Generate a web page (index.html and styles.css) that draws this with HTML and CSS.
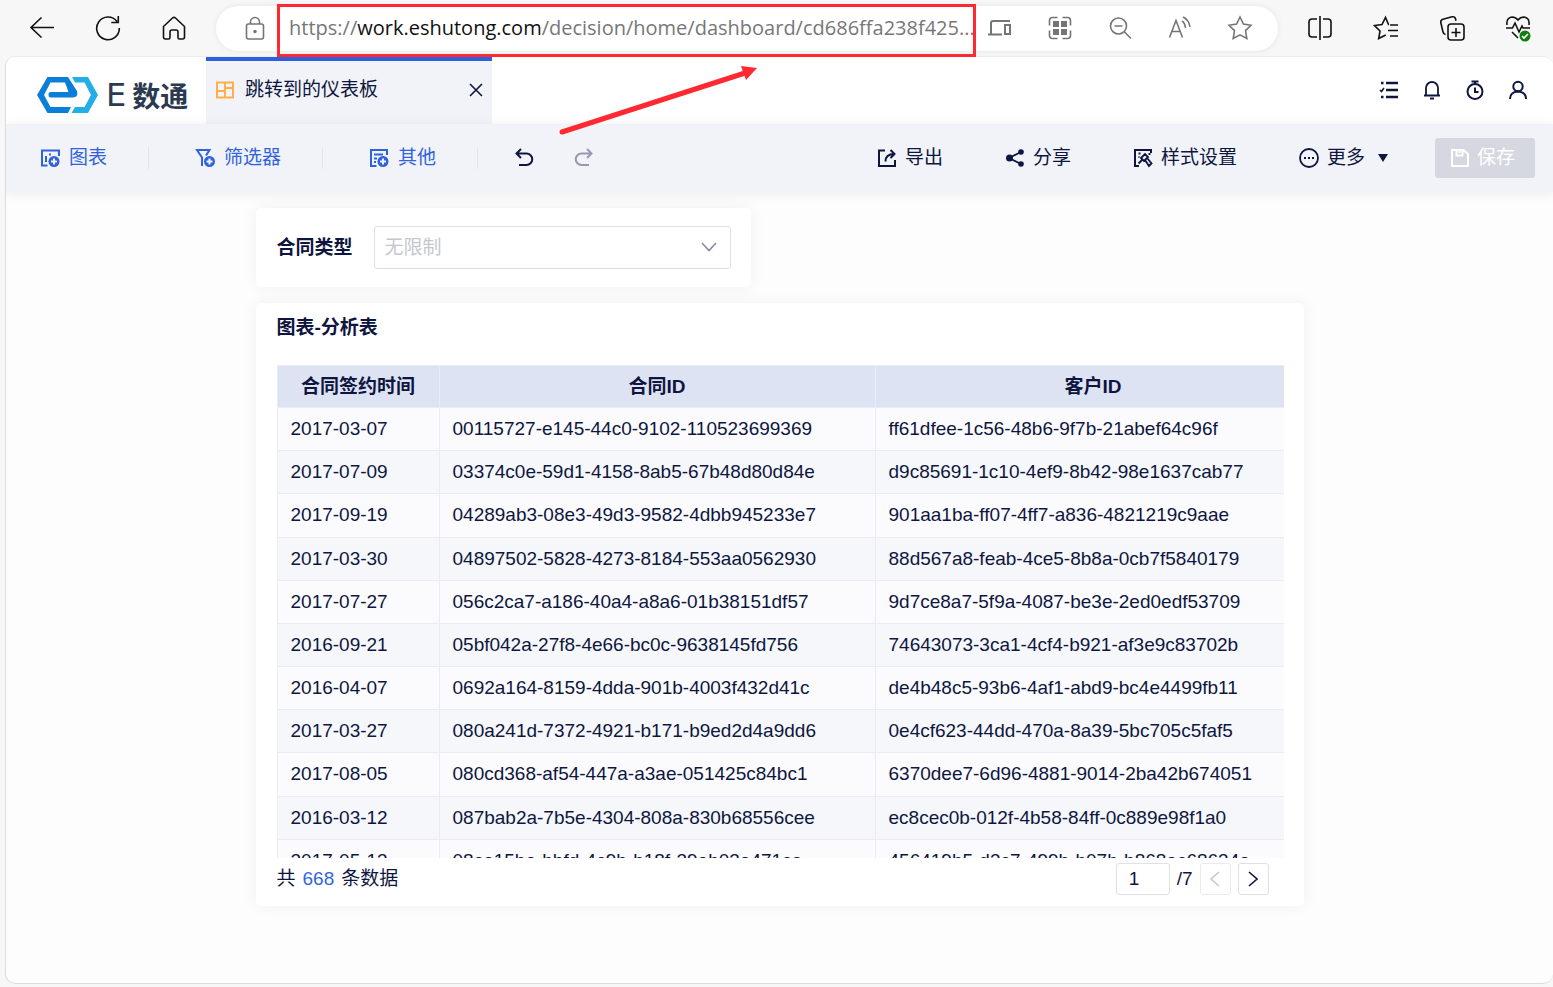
FILE: index.html
```html
<!DOCTYPE html>
<html lang="zh-CN">

<head>
    <meta charset="UTF-8">
    <title>跳转到的仪表板</title>
    <link rel="stylesheet" href="styles.css">
</head>

<body>
    <div class="browserBar">
        <div class="navBtns">
            <button class="iconBtn" aria-label="后退"><svg width="26" height="24" viewBox="0 0 26 24"><path d="M25 11.500H2M12.500 1.500L2 11.500l10.500 10"/></svg></button>
            <button class="iconBtn" aria-label="刷新"><svg width="26" height="26" viewBox="0 0 26 26"><path d="M22 6.500A11.300 11.300 0 1 0 24.300 13M23.300 1v6.500h-7"/></svg></button>
            <button class="iconBtn" aria-label="主页"><svg width="24" height="26" viewBox="0 0 24 26"><path d="M1.500 11.500L10.500 3q1.500-1.300 3 0l9 8.500V22q0 2-2 2h-3q-1.500 0-1.500-1.500V17q0-2-2-2h-4q-2 0-2 2v5.500Q8 24 6.500 24h-3q-2 0-2-2z"/></svg></button>
        </div>
        <div class="addressBar">
            <svg width="24" height="26" viewBox="0 0 24 26"><rect x="3.500" y="9" width="17" height="15" rx="2"/><path d="M7.500 9V7a4.500 4.500 0 0 1 9 0v2"/><circle cx="12" cy="16.500" r="1" class="fill"/></svg>
            <div class="url" role="textbox" aria-label="地址"><span>https://</span>work.eshutong.com<span>/decision/home/dashboard/cd686ffa238f425...</span></div>
            <div class="addressBtns">
                <button class="iconBtn" aria-label="设备"><svg width="24" height="24" viewBox="0 0 24 24"><path stroke-width="2" d="M22 5H5q-2 0-2 2v11M0 18.500h14M17 9h5v9h-5z"/></svg></button>
                <button class="iconBtn" aria-label="二维码"><svg width="24" height="24" viewBox="0 0 24 24"><path d="M1.500 9.500V4.500q0-3 3-3h5M14.500 1.500h5q3 0 3 3v5M22.500 14.500v5q0 3-3 3h-5M9.500 22.500h-5q-3 0-3-3v-5"/><path class="fill" stroke="none" d="M5 5h6v6H5zM13 5h6v6h-6zM5 13h6v6H5zM13 13h6v6h-6z"/></svg></button>
                <button class="iconBtn" aria-label="缩小"><svg width="24" height="24" viewBox="0 0 24 24"><circle cx="10.500" cy="10" r="8"/><path d="M6.500 10h8M16.500 16l6.500 6.500"/></svg></button>
                <button class="iconBtn" aria-label="朗读"><svg width="24" height="24" viewBox="0 0 24 24"><path d="M1.500 21.500L8 4.500l6.500 17M4 15.500h8M14 5q3 2 3.500 7M15 1q6 3 7 10"/></svg></button>
                <button class="iconBtn" aria-label="收藏"><svg width="26" height="26" viewBox="0 0 26 26"><path d="M13 2l3.400 7 7.600 1.200-5.500 5.400 1.300 7.900L13 19.800l-6.800 3.700 1.300-7.900L2 10.200 9.600 9z"/></svg></button>
            </div>
            <div class="redBox"></div>
        </div>
        <div class="extBtns">
            <button class="iconBtn" aria-label="分屏"><svg width="26" height="26" viewBox="0 0 26 26"><path d="M10 4H5Q2 4 2 7v12q0 3 3 3h5M16 4h5q3 0 3 3v12q0 3-3 3h-5M13 1v24"/></svg></button>
            <button class="iconBtn" aria-label="收藏夹"><svg width="26" height="26" viewBox="0 0 26 26"><path d="M16 9.500h-.500L12.500 2.500 9 9.500l-7.500 1 5.500 5.500-1.300 7.500 7-3.500M17 10h8M15 15.500h10M17 21h8"/></svg></button>
            <button class="iconBtn" aria-label="集锦"><svg width="26" height="26" viewBox="0 0 26 26"><rect x="9" y="9" width="16" height="16" rx="3"/><path d="M17 13v9M12.500 17.500h9M6.500 19.500Q4.500 19 4 17L1.800 7.500Q1.500 5 4 4.300l9-2.500q3-.500 3.500 2l.5 2"/></svg></button>
            <button class="iconBtn" aria-label="浏览器概要"><svg width="26" height="28" viewBox="0 0 26 28"><path d="M2 11Q1 4 7 3q3.500 0 6 3 2.500-3 6-3 6 1 5 8M1 14h6.500l2.500-5 4 9 3-6 1 2h7M7 18l6 6"/><circle cx="20" cy="22" r="5.500" class="ok"/><path class="tick" d="M17 22l2 2 4-4"/></svg></button>
        </div>
    </div>

    <div class="page">
        <header class="topBar">
            <div class="logo">
                <svg width="61" height="36" viewBox="0 0 61 36"><path fill="#0a7fd9" d="M10.500 0H31l9 14q1.500 6-4 6.500H14q-2.500 0-2.500-2.800T14 15h17.500L28 5.500H13.500L7 18l6.500 12H34l-3 6H10.500L0 18z"/><path fill="#24aee6" d="M35 0h16l10 18-10 18H34.500l3.500-6h9.500L54 18 47.500 5.500H38z"/></svg>
                <span class="latin">E</span><span>数通</span>
            </div>
            <div class="tab">
                <svg width="18" height="18" viewBox="0 0 18 18"><path fill="none" stroke="#fbb04c" stroke-width="2" d="M1 1.500h16v15H1zM9 1v16M1 10h8M9 7h8"/></svg>
                <span>跳转到的仪表板</span>
                <button class="iconBtn" aria-label="关闭"><svg width="14" height="14" viewBox="0 0 14 14"><path d="M1 1l12 12M13 1L1 13"/></svg></button>
            </div>
            <div class="userBtns">
                <button class="iconBtn" aria-label="任务"><svg width="20" height="20" viewBox="0 0 20 20"><path stroke-width="2.500" d="M7 3h12M7 10h12M7 17h12M2 3h2.500M2 17h2.500"/><path d="M1 10l1.500 1.500L5 8"/></svg></button>
                <button class="iconBtn" aria-label="通知"><svg width="20" height="20" viewBox="0 0 20 20"><path stroke-width="1.800" d="M2 15.500h16M4 15V8a6 6 0 0 1 12 0v7M8 18.500h4"/></svg></button>
                <button class="iconBtn" aria-label="定时"><svg width="20" height="20" viewBox="0 0 20 20"><circle cx="10" cy="11.500" r="7.500" stroke-width="2"/><path stroke-width="2" d="M6.500 1.500h7M10 2v2M10 7.500V12h3.500"/></svg></button>
                <button class="iconBtn" aria-label="用户"><svg width="20" height="20" viewBox="0 0 20 20"><circle cx="10" cy="6.500" r="4.700" stroke-width="2"/><path stroke-width="2" d="M2 19q0-7 8-7.500 8 .5 8 7.500"/></svg></button>
            </div>
        </header>

        <div class="toolBar">
            <button class="toolBtn add"><svg width="20" height="20" viewBox="0 0 20 20"><path stroke-width="2" d="M7.500 17.500H2v-15h17V8M6 14V8M10 5.500v2"/><circle cx="14" cy="13.500" r="5.500" class="fill" stroke="none"/><path class="plus" d="M14 10.500v6M11 13.500h6"/></svg>图表</button>
            <button class="toolBtn add"><svg width="20" height="20" viewBox="0 0 20 20"><path stroke-width="2" d="M7 18V9.500L2 2h12.500L11 7.500"/><circle cx="14.500" cy="13.500" r="5.500" class="fill" stroke="none"/><path class="plus" d="M14.500 10.500v6M11.500 13.500h6"/></svg>筛选器</button>
            <button class="toolBtn add"><svg width="20" height="20" viewBox="0 0 20 20"><path stroke-width="2" d="M7.500 18H2V2h16v5M5 6.500h9M5 10.500h3M5 14h2"/><circle cx="14" cy="13.500" r="5.500" class="fill" stroke="none"/><path class="plus" d="M14 10.500v6M11 13.500h6"/></svg>其他</button>
            <div class="history">
                <button class="iconBtn" aria-label="撤销"><svg width="20" height="20" viewBox="0 0 20 20"><path stroke-width="2" d="M7 1L2.500 5.500 7 10M3 5.500h9.500a5.700 5.700 0 0 1 0 11.500H5"/></svg></button>
                <button class="iconBtn" aria-label="重做" disabled><svg width="20" height="20" viewBox="0 0 20 20"><path stroke-width="2" d="M13 1l4.500 4.500L13 10M17 5.500H7.500a5.700 5.700 0 0 0 0 11.500H15"/></svg></button>
            </div>
            <div class="actions">
                <button class="toolBtn"><svg width="20" height="20" viewBox="0 0 20 20"><path stroke-width="2" d="M8 2.500H2v15.500h16v-6M8.500 13.500Q8.500 6 17 6M13.500 2l4 4-4 4"/></svg>导出</button>
                <button class="toolBtn"><svg width="20" height="20" viewBox="0 0 20 20"><path stroke-width="1.800" d="M16 4L4 10l12 6"/><circle cx="4.500" cy="10" r="3.500" class="fill" stroke="none"/><circle cx="16" cy="4" r="2.800" class="fill" stroke="none"/><circle cx="16" cy="16" r="2.800" class="fill" stroke="none"/></svg>分享</button>
                <button class="toolBtn"><svg width="20" height="20" viewBox="0 0 20 20"><path stroke-width="2" d="M2 19V2h17M2 18h4M18 2v3"/><path stroke-width="1.800" d="M8 10l4-4 3 3-4 4zM9 12l-3.500 3.500M12 12l4 6 2.500-2.500-4-5M5.500 5.500h2M15.500 6h2M5.500 9h1"/></svg>样式设置</button>
                <button class="toolBtn"><svg width="20" height="20" viewBox="0 0 20 20"><circle cx="10" cy="10" r="9" stroke-width="1.800"/><path stroke-width="2" d="M5 10h2M9 10h2M13 10h2"/></svg>更多<i class="caret"></i></button>
            </div>
            <button class="saveBtn" disabled><svg width="20" height="20" viewBox="0 0 20 20"><path stroke-width="2" d="M2 2h11.500L18 6v12H2zM6.500 2v5.500h6V2M9.500 3v2"/></svg>保存</button>
        </div>

        <main class="canvas">
            <div class="dashboard">
                <div class="card filter">
                    <label for="contractType">合同类型</label>
                    <div class="selectBox">
                        <select id="contractType">
                            <option>无限制</option>
                        </select>
                        <svg width="16" height="10" viewBox="0 0 16 10"><path d="M1 1l7 7.500L15 1"/></svg>
                    </div>
                </div>

                <div class="card chart">
                    <h2>图表-分析表</h2>
                    <div class="tableBox">
                        <table>
                            <colgroup>
                                <col class="colDate">
                                <col class="colContract">
                                <col>
                            </colgroup>
                            <thead>
                                <tr><th>合同签约时间</th><th>合同ID</th><th>客户ID</th></tr>
                            </thead>
                            <tbody>
                                <tr><td>2017-03-07</td><td>00115727-e145-44c0-9102-110523699369</td><td>ff61dfee-1c56-48b6-9f7b-21abef64c96f</td></tr>
                                <tr><td>2017-07-09</td><td>03374c0e-59d1-4158-8ab5-67b48d80d84e</td><td>d9c85691-1c10-4ef9-8b42-98e1637cab77</td></tr>
                                <tr><td>2017-09-19</td><td>04289ab3-08e3-49d3-9582-4dbb945233e7</td><td>901aa1ba-ff07-4ff7-a836-4821219c9aae</td></tr>
                                <tr><td>2017-03-30</td><td>04897502-5828-4273-8184-553aa0562930</td><td>88d567a8-feab-4ce5-8b8a-0cb7f5840179</td></tr>
                                <tr><td>2017-07-27</td><td>056c2ca7-a186-40a4-a8a6-01b38151df57</td><td>9d7ce8a7-5f9a-4087-be3e-2ed0edf53709</td></tr>
                                <tr><td>2016-09-21</td><td>05bf042a-27f8-4e66-bc0c-9638145fd756</td><td>74643073-3ca1-4cf4-b921-af3e9c83702b</td></tr>
                                <tr><td>2016-04-07</td><td>0692a164-8159-4dda-901b-4003f432d41c</td><td>de4b48c5-93b6-4af1-abd9-bc4e4499fb11</td></tr>
                                <tr><td>2017-03-27</td><td>080a241d-7372-4921-b171-b9ed2d4a9dd6</td><td>0e4cf623-44dd-470a-8a39-5bc705c5faf5</td></tr>
                                <tr><td>2017-08-05</td><td>080cd368-af54-447a-a3ae-051425c84bc1</td><td>6370dee7-6d96-4881-9014-2ba42b674051</td></tr>
                                <tr><td>2016-03-12</td><td>087bab2a-7b5e-4304-808a-830b68556cee</td><td>ec8cec0b-012f-4b58-84ff-0c889e98f1a0</td></tr>
                                <tr><td>2017-05-13</td><td>08ca15be-bbfd-4c9b-b18f-39eb03e471ca</td><td>456419b5-d3c7-499b-b07b-b868ec68634e</td></tr>
                            </tbody>
                        </table>
                    </div>
                    <div class="pager">
                        <div class="total">共<span>668</span>条数据</div>
                        <input type="text" value="1" aria-label="页码">
                        <span>/7</span>
                        <button class="pageBtn" aria-label="上一页" disabled><svg width="10" height="16" viewBox="0 0 10 16"><path d="M9 1L1 8l8 7"/></svg></button>
                        <button class="pageBtn" aria-label="下一页"><svg width="10" height="16" viewBox="0 0 10 16"><path d="M1 1l8 7-8 7"/></svg></button>
                    </div>
                </div>
            </div>
        </main>
    </div>

    <svg class="arrow" width="200" height="72" viewBox="0 0 200 72"><path d="M4 67L187 8" stroke="#ff2a31" stroke-width="5"/><circle cx="4" cy="67" r="2.500" fill="#ff2a31"/><path d="M199 3l-16-2 5 14z" fill="#ff2a31"/></svg>
</body>

</html>
```
FILE: styles.css
```css
* {
    box-sizing: border-box;
}

body {
    margin: 0;
    min-height: 100vh;
    display: flex;
    flex-direction: column;
    position: relative;
    background: #f7f7f7;
    color: #0e1640;
    font-family: "Liberation Sans", "Noto Sans CJK SC", sans-serif;
    font-size: 19px;
    line-height: 28px;
}

button {
    padding: 0;
    border: none;
    background: none;
    color: inherit;
    font: inherit;
}

svg {
    flex: none;
    fill: none;
    stroke: currentColor;
    stroke-width: 1.6;
}

svg .fill {
    fill: currentColor;
}

.logo svg {
    stroke: none;
}

.iconBtn {
    display: flex;
    flex: none;
    width: 24px;
    justify-content: center;
    align-items: center;
}

/* browser bar */
.browserBar {
    display: flex;
    align-items: center;
    height: 56px;
    padding: 0 23px 0 30px;
    color: #111;
}

.navBtns,
.extBtns {
    display: flex;
    align-items: center;
    gap: 42px;
}

.addressBar {
    position: relative;
    display: flex;
    flex: 1;
    align-items: center;
    min-width: 0;
    height: 45px;
    margin: 0 30px;
    padding: 0 26px 0 27px;
    border-radius: 23px;
    background: #fff;
    box-shadow: 0 0 6px rgba(0, 0, 0, 0.08);
    color: #757575;
}

.url {
    flex: 1;
    min-width: 0;
    margin-left: 22px;
    overflow: hidden;
    white-space: nowrap;
    color: #111;
    font-family: "Open Sans", sans-serif;
    font-size: 20px;
}

.url span {
    color: #777;
}

.addressBtns {
    display: flex;
    align-items: center;
    gap: 36px;
}

.redBox {
    position: absolute;
    left: 61px;
    right: 302px;
    top: -2px;
    height: 53px;
    border: 3px solid #ff2a31;
    z-index: 1;
}

.ok {
    fill: #107c10;
    stroke: none;
}

.tick {
    stroke: #fff;
}

.arrow {
    position: absolute;
    left: 558px;
    top: 65px;
    stroke: none;
}

/* page */
.page {
    display: flex;
    flex: 1;
    flex-direction: column;
    margin: 0 0 3px 5px;
    border: 1px solid #dcdcdc;
    border-top-color: #ececec;
    border-right: none;
    border-radius: 10px;
    background: #fdfdfd;
    overflow: hidden;
}

.topBar {
    display: flex;
    height: 67px;
    background: #fff;
}

.logo {
    display: flex;
    align-items: center;
    width: 200px;
    padding: 8px 0 0 31px;
    gap: 6px;
    color: #2b3a50;
    font-family: "Noto Sans CJK SC", sans-serif;
    font-size: 28px;
    font-weight: bold;
    white-space: nowrap;
}

.logo .latin {
    margin-left: 2px;
    font-family: "DejaVu Sans", sans-serif;
    font-size: 32px;
    font-weight: normal;
}

.tab {
    display: flex;
    align-items: center;
    width: 286px;
    padding: 0 4px 5px 10px;
    gap: 11px;
    border-top: 4px solid #2c60dc;
    background: #f2f3f8;
}

.tab .iconBtn {
    margin-left: auto;
}

.userBtns {
    display: flex;
    align-items: center;
    gap: 19px;
    margin-left: auto;
    padding: 0 23px 2px 0;
}

.toolBar {
    display: flex;
    align-items: center;
    height: 68px;
    padding: 0 18px 0 34px;
    background: #f2f3f8;
    box-shadow: 0 2px 12px rgba(0, 0, 0, 0.07);
    position: relative;
    white-space: nowrap;
}

.toolBtn {
    display: flex;
    align-items: center;
    height: 34px;
    gap: 8px;
}

.add {
    gap: 9px;
    padding-right: 42px;
    margin-right: 46px;
    color: #2f62dd;
    position: relative;
}

/* divider after each add button */
.add::after {
    content: "";
    position: absolute;
    right: 0;
    top: 6px;
    width: 1px;
    height: 22px;
    background: #e3e5ec;
}

.plus {
    stroke: #f2f3f8;
    stroke-width: 2;
}

.history {
    display: flex;
    gap: 36px;
    margin-left: -12px;
}

.history button:disabled {
    opacity: 0.4;
}

.actions {
    display: flex;
    gap: 62px;
    margin-left: auto;
}

.caret {
    margin-left: 5px;
    border: 5px solid transparent;
    border-top: 8px solid #0e1640;
    border-bottom: none;
}

.saveBtn {
    display: flex;
    align-items: center;
    width: 100px;
    height: 40px;
    margin-left: 47px;
    padding-left: 15px;
    gap: 7px;
    border-radius: 3px;
    background: #d5d8e0;
    color: #fff;
}

.canvas {
    flex: 1;
    padding: 16px 20px;
}

.dashboard {
    max-width: 1048px;
    margin: 0 auto;
}

.card {
    border-radius: 5px;
    background: #fff;
    box-shadow: 0 0 16px rgba(0, 0, 0, 0.06);
}

.filter {
    display: flex;
    align-items: center;
    width: 495px;
    height: 79px;
    padding: 0 20px 0 21px;
    gap: 21px;
    font-weight: bold;
}

.selectBox {
    position: relative;
    flex: 1;
}

.selectBox select {
    appearance: none;
    width: 100%;
    height: 43px;
    padding: 0 10px;
    border: 1px solid #dfe0e7;
    border-radius: 3px;
    background: #fff;
    color: #c5c7d0;
    font: inherit;
    font-weight: normal;
}

.selectBox svg {
    position: absolute;
    right: 14px;
    top: 16px;
    color: #868ba3;
}

.chart {
    margin-top: 16px;
    padding: 0 20px 11px 21px;
}

.chart h2 {
    margin: 0;
    padding-bottom: 12px;
    font-size: 19px;
    line-height: 50px;
}

.tableBox {
    height: 493px;
    overflow: hidden;
}

/* last column runs under the right edge of the box */
table {
    width: calc(100% + 27px);
    height: 518px;
    table-layout: fixed;
    border-collapse: collapse;
}

.colDate {
    width: 162px;
}

.colContract {
    width: 436px;
}

th,
td {
    padding: 0 13px;
    border: 1px solid #e9ebf6;
    border-right: none;
}

th {
    height: 42px;
    background: #dee3f4;
}

td {
    text-align: left;
    background: #fbfbfd;
}

tbody tr:nth-child(even) td {
    background: #f5f7fb;
}

.pager {
    display: flex;
    align-items: center;
    gap: 7px;
    margin-top: 5px;
    padding-right: 15px;
}

.total {
    margin-right: auto;
}

.total span {
    margin: 0 7px;
    color: #3366e0;
}

.pager input {
    width: 54px;
    height: 32px;
    padding: 0 12px;
    border: 1px solid #dfe0e9;
    border-radius: 3px;
    color: inherit;
    font: inherit;
}

.pageBtn {
    display: flex;
    align-items: center;
    justify-content: center;
    width: 31px;
    height: 32px;
    border: 1px solid #dfe0e9;
    border-radius: 3px;
}

.pageBtn:disabled {
    border-color: #e9eaf0;
    color: #c5c7d3;
}
```
